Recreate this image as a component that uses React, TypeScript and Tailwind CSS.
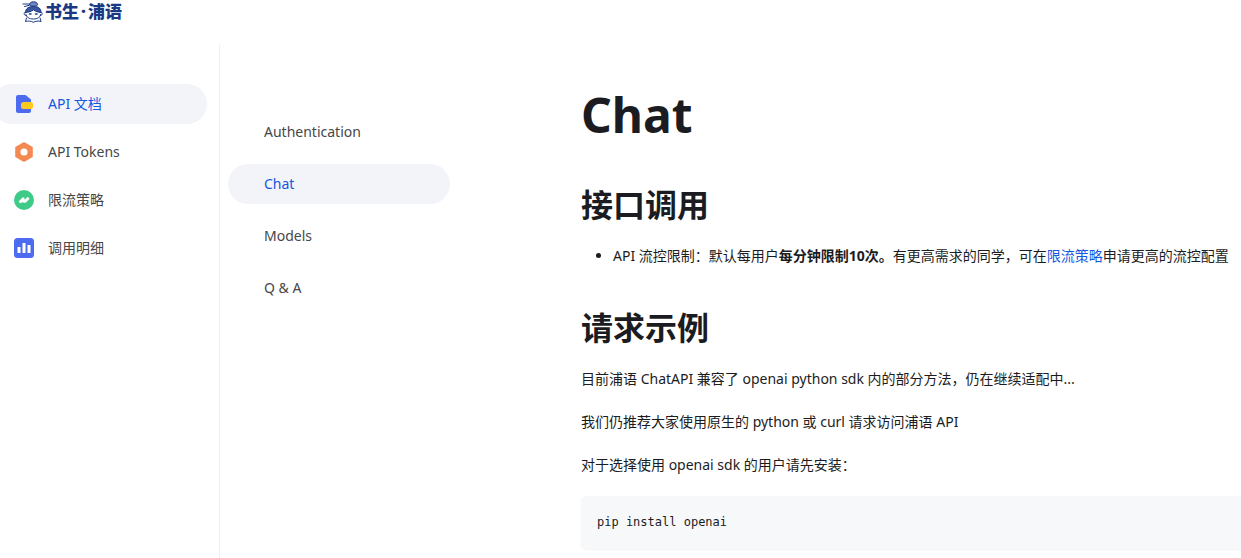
import type { ReactNode } from 'react';
import clsx from 'clsx';

function DocIcon() {
  return (
    <svg width="20" height="20" viewBox="0 0 20 20" aria-hidden="true">
      <path d="M4 1h7.5L17 5.5V17a2 2 0 0 1-2 2H4a2 2 0 0 1-2-2V3a2 2 0 0 1 2-2z" fill="#4c6bef" />
      <rect x="7" y="8" width="12" height="7" rx="2.5" fill="#ffc91d" />
    </svg>
  );
}

function TokenIcon() {
  return (
    <svg width="20" height="20" viewBox="0 0 20 20" aria-hidden="true">
      <path
        d="M10 1.2 17.8 5.6v8.8L10 18.8 2.2 14.4V5.6z"
        fill="#f48953"
        stroke="#f48953"
        strokeWidth="2"
        strokeLinejoin="round"
      />
      <circle cx="10" cy="10" r="3.6" fill="#fff" />
    </svg>
  );
}

function LimitIcon() {
  return (
    <svg width="20" height="20" viewBox="0 0 20 20" aria-hidden="true">
      <circle cx="10" cy="10" r="10" fill="#3ecb87" />
      <path
        d="M5.6 12.4 9.2 8.8v2.4l1.8.2 3.6-3.6"
        fill="none"
        stroke="#fff"
        strokeWidth="2.8"
        strokeLinejoin="round"
      />
    </svg>
  );
}

function UsageIcon() {
  return (
    <svg width="20" height="20" viewBox="0 0 20 20" aria-hidden="true">
      <rect width="20" height="20" rx="3.5" fill="#4c6bef" />
      <path d="M3.5 9h3v6h-3zM8.5 5h3v10h-3zM13.5 7h3v8h-3z" fill="#fff" />
    </svg>
  );
}

function Logo() {
  return (
    <a href="#" className="flex items-center gap-0.5 text-[#1b3882]">
      <svg
        width="21"
        height="22"
        viewBox="0 0 21 22"
        fill="none"
        stroke="currentColor"
        strokeLinecap="round"
        strokeLinejoin="round"
        aria-hidden="true"
      >
        {/* bun and ribbon */}
        <path d="M7.5 3.4C7.5 1.7 9.3.8 11.5.8s4 .9 4 2.6-1.6 1.8-4 1.8-4-.1-4-1.8z" fill="#6f88c2" />
        <path d="M1 3h6M2.5 5.5 7 4.4" />
        {/* hair */}
        <path d="M3.5 11.5c0-4 3-6 8-6s7.5 2 7.5 6c-3-.3-5.5-1-7.5-2.7-2 1.7-5 2.400-8 2.700z" fill="#3a57a0" />
        {/* face and ears */}
        <path d="M3.5 11c-2 .2-2 3.400.5 3.600M19 11c1.800.2 1.800 3.400-.5 3.600" />
        <path d="M4 13.500c.3 2.700 3.200 4.500 7.300 4.500s7-1.800 7.300-4.500" />
        <path d="M7.500 13H9M13.500 13H15" strokeWidth="1.500" />
        {/* book */}
        <path d="M4.500 17 3.500 20.500c2.700-.8 5.500-.5 7.800.8 2.300-1.300 5.200-1.600 7.800-.8L18 17" />
      </svg>
      <span className="flex gap-0.5 text-[17px] leading-6 font-black">
        <span>书生</span>
        <span>·</span>
        <span>浦语</span>
      </span>
    </a>
  );
}

const sections: { label: string; icon: ReactNode }[] = [
  { label: 'API 文档', icon: <DocIcon /> },
  { label: 'API Tokens', icon: <TokenIcon /> },
  { label: '限流策略', icon: <LimitIcon /> },
  { label: '调用明细', icon: <UsageIcon /> },
];

const pages = ['Authentication', 'Chat', 'Models', 'Q & A'];

export default function App() {
  return (
    <div className="flex min-h-screen flex-col overflow-x-hidden bg-white font-['Noto_Sans','Noto_Sans_CJK_SC',sans-serif] text-sm text-[#1b1c21]">
      <header className="h-11 shrink-0 pl-[22px]">
        <div className="flex">
          <Logo />
        </div>
      </header>

      <div className="flex grow">
        <nav className="flex w-[220px] shrink-0 flex-col gap-2 border-r border-[#f1f1f4] pt-10 pr-3">
          {sections.map((section, i) => (
            <a
              key={section.label}
              href="#"
              className={clsx(
                '-ml-2 flex h-10 items-center gap-3.5 rounded-full pl-[22px]',
                i === 0 ? 'bg-[#f3f4f9] text-[#1557e0]' : 'text-[#464749]',
              )}
            >
              {section.icon}
              {section.label}
            </a>
          ))}
        </nav>

        <nav className="flex w-[238px] shrink-0 flex-col gap-3 px-2 pt-[68px]">
          {pages.map((page) => (
            <a
              key={page}
              href="#"
              className={clsx(
                'flex h-10 items-center rounded-full pl-9',
                page === 'Chat' ? 'bg-[#f3f4f9] text-[#1557e0]' : 'text-[#464749]',
              )}
            >
              {page}
            </a>
          ))}
        </nav>

        <main className="min-w-0 grow pt-9 pl-[123px]">
          <h1 className="text-5xl leading-[69px] font-bold">Chat</h1>
          <h2 className="mt-8 text-[32px] leading-[48px] font-bold">接口调用</h2>
          <ul className="mt-[15px] list-disc pl-8 leading-6">
            <li className="whitespace-nowrap">
              API 流控限制：默认每用户<strong>每分钟限制10次。</strong>有更高需求的同学，可在
              <a href="#" className="text-[#1557e0]">
                限流策略
              </a>
              申请更高的流控配置
            </li>
          </ul>
          <h2 className="mt-9 text-[32px] leading-[48px] font-bold">请求示例</h2>
          <div className="mt-[15px] space-y-5 leading-[23px]">
            <p>目前浦语 ChatAPI 兼容了 openai python sdk 内的部分方法，仍在继续适配中...</p>
            <p>我们仍推荐大家使用原生的 python 或 curl 请求访问浦语 API</p>
            <p>对于选择使用 openai sdk 的用户请先安装：</p>
            <pre className="rounded-l-md bg-[#f7f8fa] p-4 text-xs leading-5 shadow-xs">
              <code className="font-['DejaVu_Sans_Mono',monospace]">pip install openai</code>
            </pre>
          </div>
        </main>
      </div>
    </div>
  );
}
